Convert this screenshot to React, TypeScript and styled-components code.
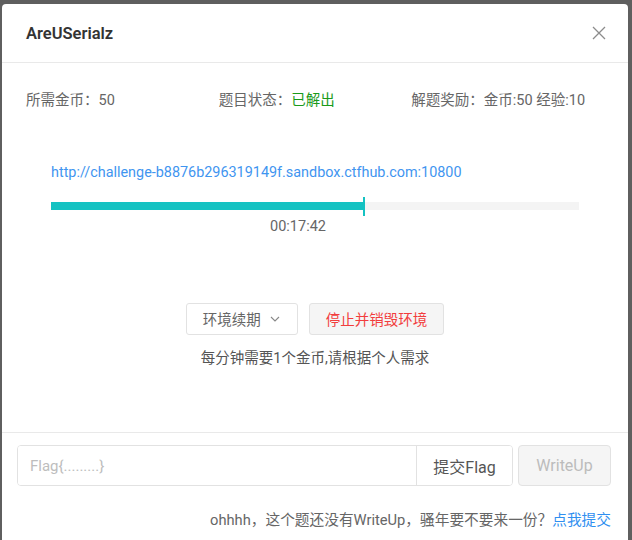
import { createGlobalStyle } from 'styled-components';
import styled from 'styled-components';

const GlobalStyle = createGlobalStyle`
    html, body {
        margin: 0;
        height: 540px;
        overflow: hidden;
        background: #5f5f5f;
    }
    body {
        font-family: Roboto, "Noto Sans CJK SC", sans-serif;
        font-size: 14.5px;
    }
`;

/* Modal shell */
const Modal = styled.div`
    margin: 4px 4px 0 2px;
    height: 536px;
    background: #ffffff;
    border-radius: 4px 4px 0 0;
    display: flex;
    flex-direction: column;
`;

const Header = styled.div`
    height: 58px;
    padding: 0 24px;
    display: flex;
    align-items: center;
    justify-content: space-between;
    border-bottom: 1px solid #e9e9e9;
`;

const Title = styled.h3`
    margin: 0;
    font-size: 16.5px;
    font-weight: 600;
    color: #333;
`;

const Close = styled.button`
    border: none;
    background: none;
    padding: 0;
    margin-right: -2px;
    display: flex;
    cursor: pointer;
`;

const Body = styled.div`
    padding: 28px 24px 0;
    flex: 0 0 370px;
    box-sizing: border-box;
    border-bottom: 1px solid #e9e9e9;
`;

const InfoRow = styled.div`
    display: grid;
    grid-template-columns: repeat(3, 1fr);
    line-height: 20px;
    color: #666;
`;

const Status = styled.span`
    color: #1a9a1a;
`;

const Env = styled.div`
    padding: 0 25px;
    margin-top: 52px;
`;

const Url = styled.a`
    display: block;
    line-height: 20px;
    font-size: 14.4px;
    color: #3f95f0;
    text-decoration: none;
`;

const Track = styled.div`
    position: relative;
    margin-top: 19px;
    height: 8px;
    background: #f4f4f4;
`;

const Fill = styled.div`
    height: 100%;
    background: #14c2c2;
`;

const Marker = styled.div`
    position: absolute;
    top: -5px;
    bottom: -6px;
    width: 2px;
    background: #14c2c2;
`;

const Time = styled.div`
    margin-top: 7px;
    padding-right: 34px;
    text-align: center;
    line-height: 20px;
    color: #666;
`;

const Actions = styled.div`
    margin-top: 66px;
    display: flex;
    justify-content: center;
    gap: 11px;
`;

const ActionButton = styled.button<{ $danger?: boolean }>`
    height: 32px;
    padding: 0 16px 1px;
    display: flex;
    align-items: center;
    gap: 8px;
    font: inherit;
    border: 1px solid #e2e2e2;
    border-radius: 3px;
    background: ${({ $danger }) => ($danger ? '#f5f5f5' : '#ffffff')};
    color: ${({ $danger }) => ($danger ? '#f23d3d' : '#666')};
    cursor: pointer;
`;

const Hint = styled.div`
    margin-top: 14px;
    text-align: center;
    line-height: 20px;
    color: #555;
`;

const Footer = styled.div`
    padding: 12px 17px 0 15px;
`;

const FlagRow = styled.div`
    display: flex;
    gap: 5px;
    height: 41px;
`;

const InputGroup = styled.div`
    flex: 1;
    display: flex;
    border: 1px solid #e2e2e2;
    border-radius: 4px;
    overflow: hidden;
`;

const FlagInput = styled.input`
    flex: 1;
    min-width: 0;
    border: none;
    outline: none;
    padding: 0 12px;
    font: inherit;
    font-size: 15px;
    color: #333;
    &::placeholder {
        color: #bdbdbd;
    }
`;

const SubmitButton = styled.button<{ $disabled?: boolean }>`
    font: inherit;
    font-size: 16px;
    padding: 0;
    color: ${({ $disabled }) => ($disabled ? '#bcbcbc' : '#555')};
    background: ${({ $disabled }) => ($disabled ? '#f5f5f5' : '#ffffff')};
    border: none;
    cursor: pointer;
`;

const AttachedButton = styled(SubmitButton)`
    width: 96px;
    border-left: 1px solid #e2e2e2;
`;

const WriteUpButton = styled(SubmitButton)`
    width: 93px;
    border: 1px solid #e2e2e2;
    border-radius: 4px;
    cursor: not-allowed;
`;

const Note = styled.div`
    margin-top: 24px;
    text-align: right;
    line-height: 20px;
    font-size: 14.7px;
    color: #666;
`;

const NoteLink = styled.a`
    color: #2f8ff0;
    text-decoration: none;
`;

export default function App() {
    const progress = 59;

    return (
        <>
            <GlobalStyle />
            <Modal>
                <Header>
                    <Title>AreUSerialz</Title>
                    <Close aria-label="close">
                        <svg width="14" height="14" viewBox="0 0 14 14">
                            <path d="M1 1 L13 13 M13 1 L1 13" stroke="#8c8c8c" strokeWidth="1.3" />
                        </svg>
                    </Close>
                </Header>
                <Body>
                    <InfoRow>
                        <span>所需金币：50</span>
                        <span>
                            题目状态：<Status>已解出</Status>
                        </span>
                        <span>解题奖励：金币:50 经验:10</span>
                    </InfoRow>
                    <Env>
                        <Url href="#">http://challenge-b8876b296319149f.sandbox.ctfhub.com:10800</Url>
                        <Track>
                            <Fill style={{ width: `${progress}%` }} />
                            <Marker style={{ left: `${progress}%` }} />
                        </Track>
                        <Time>00:17:42</Time>
                    </Env>
                    <Actions>
                        <ActionButton>
                            环境续期
                            <svg width="12" height="12" viewBox="0 0 12 12">
                                <path d="M2 4 L6 8 L10 4" fill="none" stroke="#888" strokeWidth="1.1" />
                            </svg>
                        </ActionButton>
                        <ActionButton $danger>停止并销毁环境</ActionButton>
                    </Actions>
                    <Hint>每分钟需要1个金币,请根据个人需求</Hint>
                </Body>
                <Footer>
                    <FlagRow>
                        <InputGroup>
                            <FlagInput placeholder="Flag{.........}" />
                            <AttachedButton>提交Flag</AttachedButton>
                        </InputGroup>
                        <WriteUpButton $disabled>WriteUp</WriteUpButton>
                    </FlagRow>
                    <Note>
                        ohhhh，这个题还没有WriteUp，骚年要不要来一份？<NoteLink href="#">点我提交</NoteLink>
                    </Note>
                </Footer>
            </Modal>
        </>
    );
}
